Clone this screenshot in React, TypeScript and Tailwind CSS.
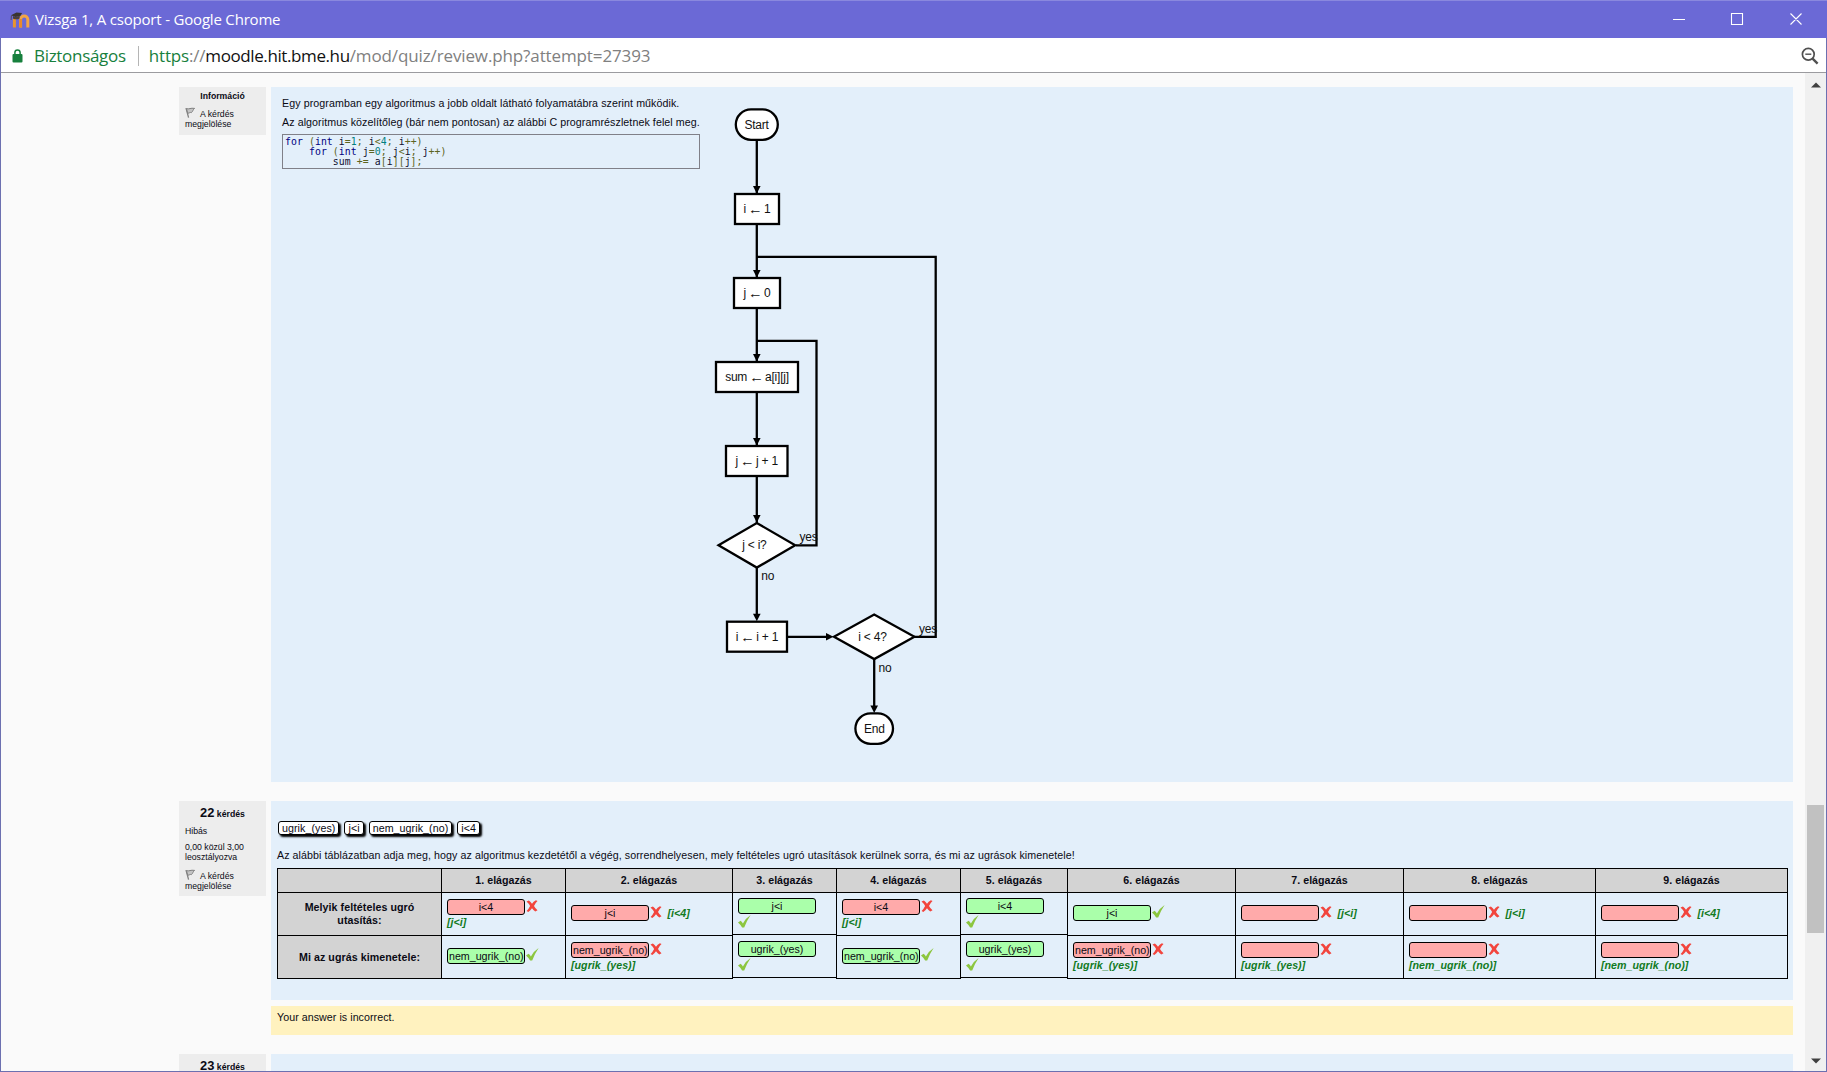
import type { ReactNode } from "react";

function MoodleIcon() {
  return (
    <svg className="h-[18px] w-5" viewBox="0 0 20 18">
      <path d="M4.4 16.5V8" fill="none" stroke="#e8952f" strokeWidth="3" />
      <path d="M10.6 16.5V8.5a3.6 3.6 0 0 1 7.2 0v8" fill="none" stroke="#f3a545" strokeWidth="3" />
      <path d="M10.6 16.5V8" stroke="#e8882a" strokeWidth="2.6" />
      <path d="M1 4.2 6.5 1.4l5.6.6-1.8 3.1-4.8 1z" fill="#3a3430" />
      <path d="M3 5c2 1.2 4.4 1.2 6.6-.4v2.8c-2.2 1.2-4.6 1.2-6.6 0z" fill="#4d4038" />
      <path d="M1.4 4.6 1.1 9" stroke="#4d4038" strokeWidth=".8" />
    </svg>
  );
}

function Lock() {
  return (
    <svg className="h-[14px] w-[11px]" viewBox="0 0 11 14">
      <path d="M2.9 6V3.6a2.6 2.6 0 0 1 5.2 0V6" fill="none" stroke="#17803d" strokeWidth="1.5" />
      <rect x=".5" y="5" width="10" height="8.6" rx="1" fill="#17803d" />
    </svg>
  );
}

function Flag() {
  return (
    <svg className="mr-[4px] inline-block h-[11px] w-[11px] align-[-1px]" viewBox="0 0 11 11">
      <path d="M1 1.2 3.6 10.6" stroke="#808080" strokeWidth="1.3" />
      <path d="M1.4 1.6C4 2.6 5.6.6 9.6 1.4 7.8 2.6 8 4.4 6.4 5.6 5 5 4.2 6.4 2.8 6.2z" fill="#c4c4c4" stroke="#808080" strokeWidth="1" />
    </svg>
  );
}

function Cross() {
  return (
    <svg className="h-3 w-3 shrink-0" viewBox="0 0 12 12">
      <path d="M.5 1.6 2.9.4Q4.7 1.8 6 3.7 7.4 1.8 9.9.3l1.6.8Q9.3 3.2 8 5.9q1.5 2.6 3.5 4.3l-2.2 1.4Q7.3 10 6 8.2 4.6 10.2 2.3 12L.6 11.1Q2.9 8.6 4.1 6 2.6 3.4.5 1.6z" fill="#f2453d" />
    </svg>
  );
}

function Tick() {
  return (
    <svg className="h-[13px] w-[13px] shrink-0" viewBox="0 0 13 13">
      <path d="M0 7.6 2.6 5.8q1.5 1.2 2.3 2.7Q7.6 3.2 12.6 0 8.8 5.6 6.2 12.6H4.1Q2.4 9.6 0 7.6z" fill="#8cc63f" />
    </svg>
  );
}

type Answer = { value: string; ok: boolean; hint?: string; stacked?: boolean };

const columns: { width: string; raised?: boolean; answers: [Answer, Answer] }[] = [
  { width: "w-[124px]", answers: [{ value: "i<4", ok: false, hint: "[j<i]", stacked: true }, { value: "nem_ugrik_(no)", ok: true }] },
  { width: "w-[167px]", answers: [{ value: "j<i", ok: false, hint: "[i<4]" }, { value: "nem_ugrik_(no)", ok: false, hint: "[ugrik_(yes)]", stacked: true }] },
  { width: "w-[104px]", raised: true, answers: [{ value: "j<i", ok: true, stacked: true }, { value: "ugrik_(yes)", ok: true, stacked: true }] },
  { width: "w-[124px]", answers: [{ value: "i<4", ok: false, hint: "[j<i]", stacked: true }, { value: "nem_ugrik_(no)", ok: true }] },
  { width: "w-[107px]", raised: true, answers: [{ value: "i<4", ok: true, stacked: true }, { value: "ugrik_(yes)", ok: true, stacked: true }] },
  { width: "w-[168px]", answers: [{ value: "j<i", ok: true }, { value: "nem_ugrik_(no)", ok: false, hint: "[ugrik_(yes)]", stacked: true }] },
  { width: "w-[168px]", answers: [{ value: "", ok: false, hint: "[j<i]" }, { value: "", ok: false, hint: "[ugrik_(yes)]", stacked: true }] },
  { width: "w-[192px]", answers: [{ value: "", ok: false, hint: "[j<i]" }, { value: "", ok: false, hint: "[nem_ugrik_(no)]", stacked: true }] },
  { width: "w-[192px]", answers: [{ value: "", ok: false, hint: "[i<4]" }, { value: "", ok: false, hint: "[nem_ugrik_(no)]", stacked: true }] },
];

function AnswerCell({ answer, short }: { answer: Answer; short?: boolean }) {
  const hint = <span className="text-[10.67px] leading-[13px] font-bold tracking-[0.02px] text-[#117a22] italic">{answer.hint}</span>;
  const pad = !answer.stacked ? "pt-3" : short ? "pt-[5px]" : "pt-1.5";
  return (
    <div className={`border-b border-black pl-[5px] ${pad} ${short ? "h-[42px]" : "h-[43px]"}`}>
      <div className="flex items-start">
        <span className={`h-4 w-[78px] shrink-0 rounded-[3px] border border-black px-px text-center leading-[15px] whitespace-nowrap ${answer.ok ? "bg-[#aaffaa]" : "bg-[#ffaaaa]"}`}>
          {answer.value}
        </span>
        {!(answer.ok && answer.stacked) && (
          <span className={answer.ok ? "ml-px" : "ml-[0.5px] pt-px"}>{answer.ok ? <Tick /> : <Cross />}</span>
        )}
        {!answer.stacked && answer.hint && <span className="ml-[6px] flex pt-[2px]">{hint}</span>}
      </div>
      {answer.stacked && (answer.ok ? <div className="pt-px"><Tick /></div> : <div className="flex pt-[0.5px]">{hint}</div>)}
    </div>
  );
}

function AnswerTable() {
  return (
    <div className="flex w-[1511px] border-t border-l border-black">
      <div className="w-[164px] border-r border-black bg-[#d3d3d3] text-center leading-[13px] font-bold tracking-[0.06px]">
        <div className="h-6 border-b border-black" />
        <div className="flex h-[43px] items-center justify-center border-b border-black px-5">Melyik feltételes ugró utasítás:</div>
        <div className="flex h-[43px] items-center justify-center border-b border-black">Mi az ugrás kimenetele:</div>
      </div>
      {columns.map((col, i) => (
        <div key={i} className={`${col.width} border-r border-black`}>
          <div className="h-6 border-b border-black bg-[#d3d3d3] text-center leading-[23px] font-bold">{i + 1}. elágazás</div>
          <AnswerCell answer={col.answers[0]} short={col.raised} />
          <AnswerCell answer={col.answers[1]} />
        </div>
      ))}
    </div>
  );
}

const boxes = [
  { x: 734, y: 193, w: 46, h: 32, target: "i", value: "1" },
  { x: 733, y: 277, w: 48, h: 32, target: "j", value: "0" },
  { x: 715, y: 361, w: 84, h: 32, target: "sum", value: "a[i][j]" },
  { x: 725, y: 445, w: 63.5, h: 32, target: "j", value: "j + 1" },
  { x: 726, y: 620.7, w: 62, h: 32, target: "i", value: "i + 1" },
];

const arrowTips = [193, 277, 361, 445, 522, 620.7];

function Flowchart() {
  return (
    <svg className="h-[695px] w-[260px]" viewBox="700 87 260 695" fontFamily="'Liberation Sans', Arial, sans-serif" fontSize="12" letterSpacing="-0.22">
      <g fill="none" stroke="#000" strokeWidth="2.3">
        <path d="M756.8 140V618" />
        <path d="M796 545.3H816.5V340.8H756.8" />
        <path d="M914 636.8H935.7V256.8H756.8" />
        <path d="M788 636.8H829M874.2 659V709" />
      </g>
      {arrowTips.map((y) => (
        <path key={y} d={`M753 ${y - 7}h7.6l-3.8 7.5z`} />
      ))}
      <path d="M870.4 705.5h7.6l-3.8 7.5z" />
      <path d="M826 633v7.6l7.5-3.8z" />
      <g fill="#fff" stroke="#000" strokeWidth="2.3">
        <rect x="735.8" y="109.4" width="42" height="30.4" rx="15.2" />
        <rect x="855.4" y="713.4" width="37.6" height="30.4" rx="15.2" />
        {boxes.map((b) => (
          <rect key={b.y} x={b.x + 1} y={b.y + 1} width={b.w - 2} height={b.h - 2} />
        ))}
        <path d="M718.5 545.3 756.8 523 795.2 545.3 756.8 567.6z" />
        <path d="M834 636.8 874.2 614.5 914.4 636.8 874.2 659.1z" />
      </g>
      <g textAnchor="middle" fill="#111">
        <text x="756.6" y="128.6">Start</text>
        {boxes.map((b) => (
          <text key={b.y} x={b.x + b.w / 2} y={b.y + 19.8}>
            {b.target}
            <tspan dx="2" dy="1" fontSize="14.5">←</tspan>
            <tspan dx="1.6" dy="-1">{b.value}</tspan>
          </text>
        ))}
        <text x="754.4" y="548.8">j &lt; i?</text>
        <text x="872.5" y="640.6">i &lt; 4?</text>
        <text x="874.4" y="732.8">End</text>
      </g>
      <g fill="#111">
        <text x="799.6" y="540.8">yes</text>
        <text x="761.3" y="579.8">no</text>
        <text x="919" y="632.8">yes</text>
        <text x="878.5" y="671.8">no</text>
      </g>
    </svg>
  );
}

const K = ({ children }: { children: ReactNode }) => <span className="text-[#00007f]">{children}</span>;
const N = ({ children }: { children: ReactNode }) => <span className="text-[#007f7f]">{children}</span>;
const O = ({ children }: { children: ReactNode }) => <span className="text-[#5c6420]">{children}</span>;

function CodeBlock() {
  return (
    <pre className="mt-[5px] h-[35px] w-[418px] border border-[#808088] pt-[2px] pl-[2px] font-['DejaVu_Sans_Mono',monospace] text-[9.8px] leading-[10px] text-[#101030]">
      <K>for</K> <O>(</O><K>int</K> i<O>=</O><N>1</N><O>;</O> i<O>&lt;</O><N>4</N><O>;</O> i<O>++)</O>{"\n    "}
      <K>for</K> <O>(</O><K>int</K> j<O>=</O><N>0</N><O>;</O> j<O>&lt;</O>i<O>;</O> j<O>++)</O>{"\n        "}
      sum <O>+=</O> a<O>[</O>i<O>][</O>j<O>];</O>
    </pre>
  );
}

function FlagLink({ className }: { className: string }) {
  return (
    <p className={`leading-[10px] ${className}`}>
      <Flag />A kérdés
      <br />
      megjelölése
    </p>
  );
}

function QuestionNumber({ n }: { n: number }) {
  return (
    <h3 className="pt-[4px] text-center text-[8.7px] leading-[16px] font-bold">
      <span className="text-[12.9px]">{n}</span> kérdés
    </h3>
  );
}

export default function App() {
  return (
    <div className="flex h-screen w-full flex-col overflow-hidden bg-[#fafafa] font-['Liberation_Sans',Arial,sans-serif] text-[10.67px] text-[#0a0a14]">
      <header className="flex h-[38px] shrink-0 items-center border-t border-[#8a88de] bg-[#6b69d6] pl-[10px] text-white">
        <MoodleIcon />
        <span className="ml-[5px] font-['Open_Sans',sans-serif] text-[15px] tracking-[-0.19px]">Vizsga 1, A csoport - Google Chrome</span>
        <svg className="mr-[24px] ml-auto h-4 w-[130px]" viewBox="0 0 130 16" fill="none" stroke="#fff" strokeWidth="1.1">
          <path d="M0 7.5h12M58.5 1.5h11v11h-11zM117.5 1.5l11 11M128.5 1.5l-11 11" />
        </svg>
      </header>

      <div className="flex min-h-0 grow flex-col border-x border-b border-[#6c70b0]">
        <div className="flex h-[35px] shrink-0 items-center border-b border-[#9b9b9f] bg-white pt-px pl-[11px] font-['Open_Sans',sans-serif] text-[17px]">
          <Lock />
          <span className="ml-[11px] tracking-[-0.3px] text-[#17803d]">Biztonságos</span>
          <span className="mr-[10px] ml-[12px] h-5 w-px bg-[#b5b5b5]" />
          <span className="tracking-[-0.18px] text-[#17803d]">https<span className="text-[#808080]">://</span></span>
          <span className="tracking-[-0.4px] text-[#111]">moodle.hit.bme.hu</span>
          <span className="tracking-[-0.12px] text-[#808080]">/mod/quiz/review.php?attempt=27393</span>
          <svg className="mr-[7px] ml-auto h-[18px] w-[18px]" viewBox="0 0 18 18" fill="none" stroke="#505050">
            <circle cx="7.3" cy="7.2" r="5.9" strokeWidth="1.7" />
            <path d="M4.3 7.2h6" strokeWidth="1.4" />
            <path d="m11.6 11.6 5 5" strokeWidth="2.4" />
          </svg>
        </div>

        <div className="flex min-h-0 grow">
          <main className="flex w-[1804px] flex-col overflow-hidden pt-[14px] pl-[178px]">
            <section className="flex h-[695px] shrink-0 items-start">
              <aside className="h-12 w-[87px] bg-[#ededed] pl-[6px] text-[8.7px]">
                <h3 className="pt-[4px] pr-[6px] text-center leading-[11px] font-bold">Információ</h3>
                <FlagLink className="mt-[5px]" />
              </aside>
              <div className="ml-[5px] flex h-full w-[1522px] bg-[#e3effa]">
                <div className="w-[429px] pt-[10px] pl-[11px] tracking-[0.08px] whitespace-nowrap">
                  <p className="leading-[13px]">Egy programban egy algoritmus a jobb oldalt látható folyamatábra szerint működik.</p>
                  <p className="mt-[6px] leading-[13px]">Az algoritmus közelítőleg (bár nem pontosan) az alábbi C programrészletnek felel meg.</p>
                  <CodeBlock />
                </div>
                <Flowchart />
              </div>
            </section>

            <section className="mt-[19px] flex shrink-0 items-start">
              <aside className="h-[95px] w-[87px] bg-[#ededed] text-[8.7px]">
                <QuestionNumber n={22} />
                <div className="pl-[6px] leading-[10px]">
                  <p className="mt-[4px]">Hibás</p>
                  <p className="mt-[6px]">0,00 közül 3,00<br />leosztályozva</p>
                  <FlagLink className="mt-[7px]" />
                </div>
              </aside>
              <div className="ml-[5px] w-[1522px]">
                <div className="h-[199px] bg-[#e3effa] pt-5 pl-[6px]">
                  <div className="flex gap-[5px] pl-px">
                    {["ugrik_(yes)", "j<i", "nem_ugrik_(no)", "i<4"].map((c) => (
                      <span key={c} className="h-[14px] rounded-[3px] border border-black bg-white px-[3px] leading-[13px] tracking-[0.07px] shadow-[2px_2px_2px_#000]">{c}</span>
                    ))}
                  </div>
                  <p className="mt-[14px] mb-[6px] leading-[13px] tracking-[0.075px]">
                    Az alábbi táblázatban adja meg, hogy az algoritmus kezdetétől a végég, sorrendhelyesen, mely feltételes ugró utasítások kerülnek sorra, és mi az ugrások kimenetele!
                  </p>
                  <AnswerTable />
                </div>
                <div className="mt-[6px] h-[29px] bg-[#fff2bf] pt-[5px] pl-[6px] leading-[13px] tracking-[0.05px]">Your answer is incorrect.</div>
              </div>
            </section>

            <section className="mt-[19px] flex shrink-0 items-start">
              <aside className="h-[95px] w-[87px] bg-[#ededed] text-[8.7px]">
                <QuestionNumber n={23} />
              </aside>
              <div className="ml-[5px] h-[95px] w-[1522px] bg-[#e3effa]" />
            </section>
          </main>

          <div className="flex grow flex-col items-center bg-[#f0f0f0]">
            <svg className="mt-[9px] h-[6px] w-[10px]" viewBox="0 0 10 6"><path d="M0 5.5 5 .5l5 5z" fill="#404040" /></svg>
            <div className="mt-[717px] h-[128px] w-[17px] bg-[#c1c1c1]" />
            <svg className="mt-auto mb-[7px] h-[6px] w-[10px]" viewBox="0 0 10 6"><path d="M0 .5h10l-5 5z" fill="#404040" /></svg>
          </div>
        </div>
      </div>
    </div>
  );
}
